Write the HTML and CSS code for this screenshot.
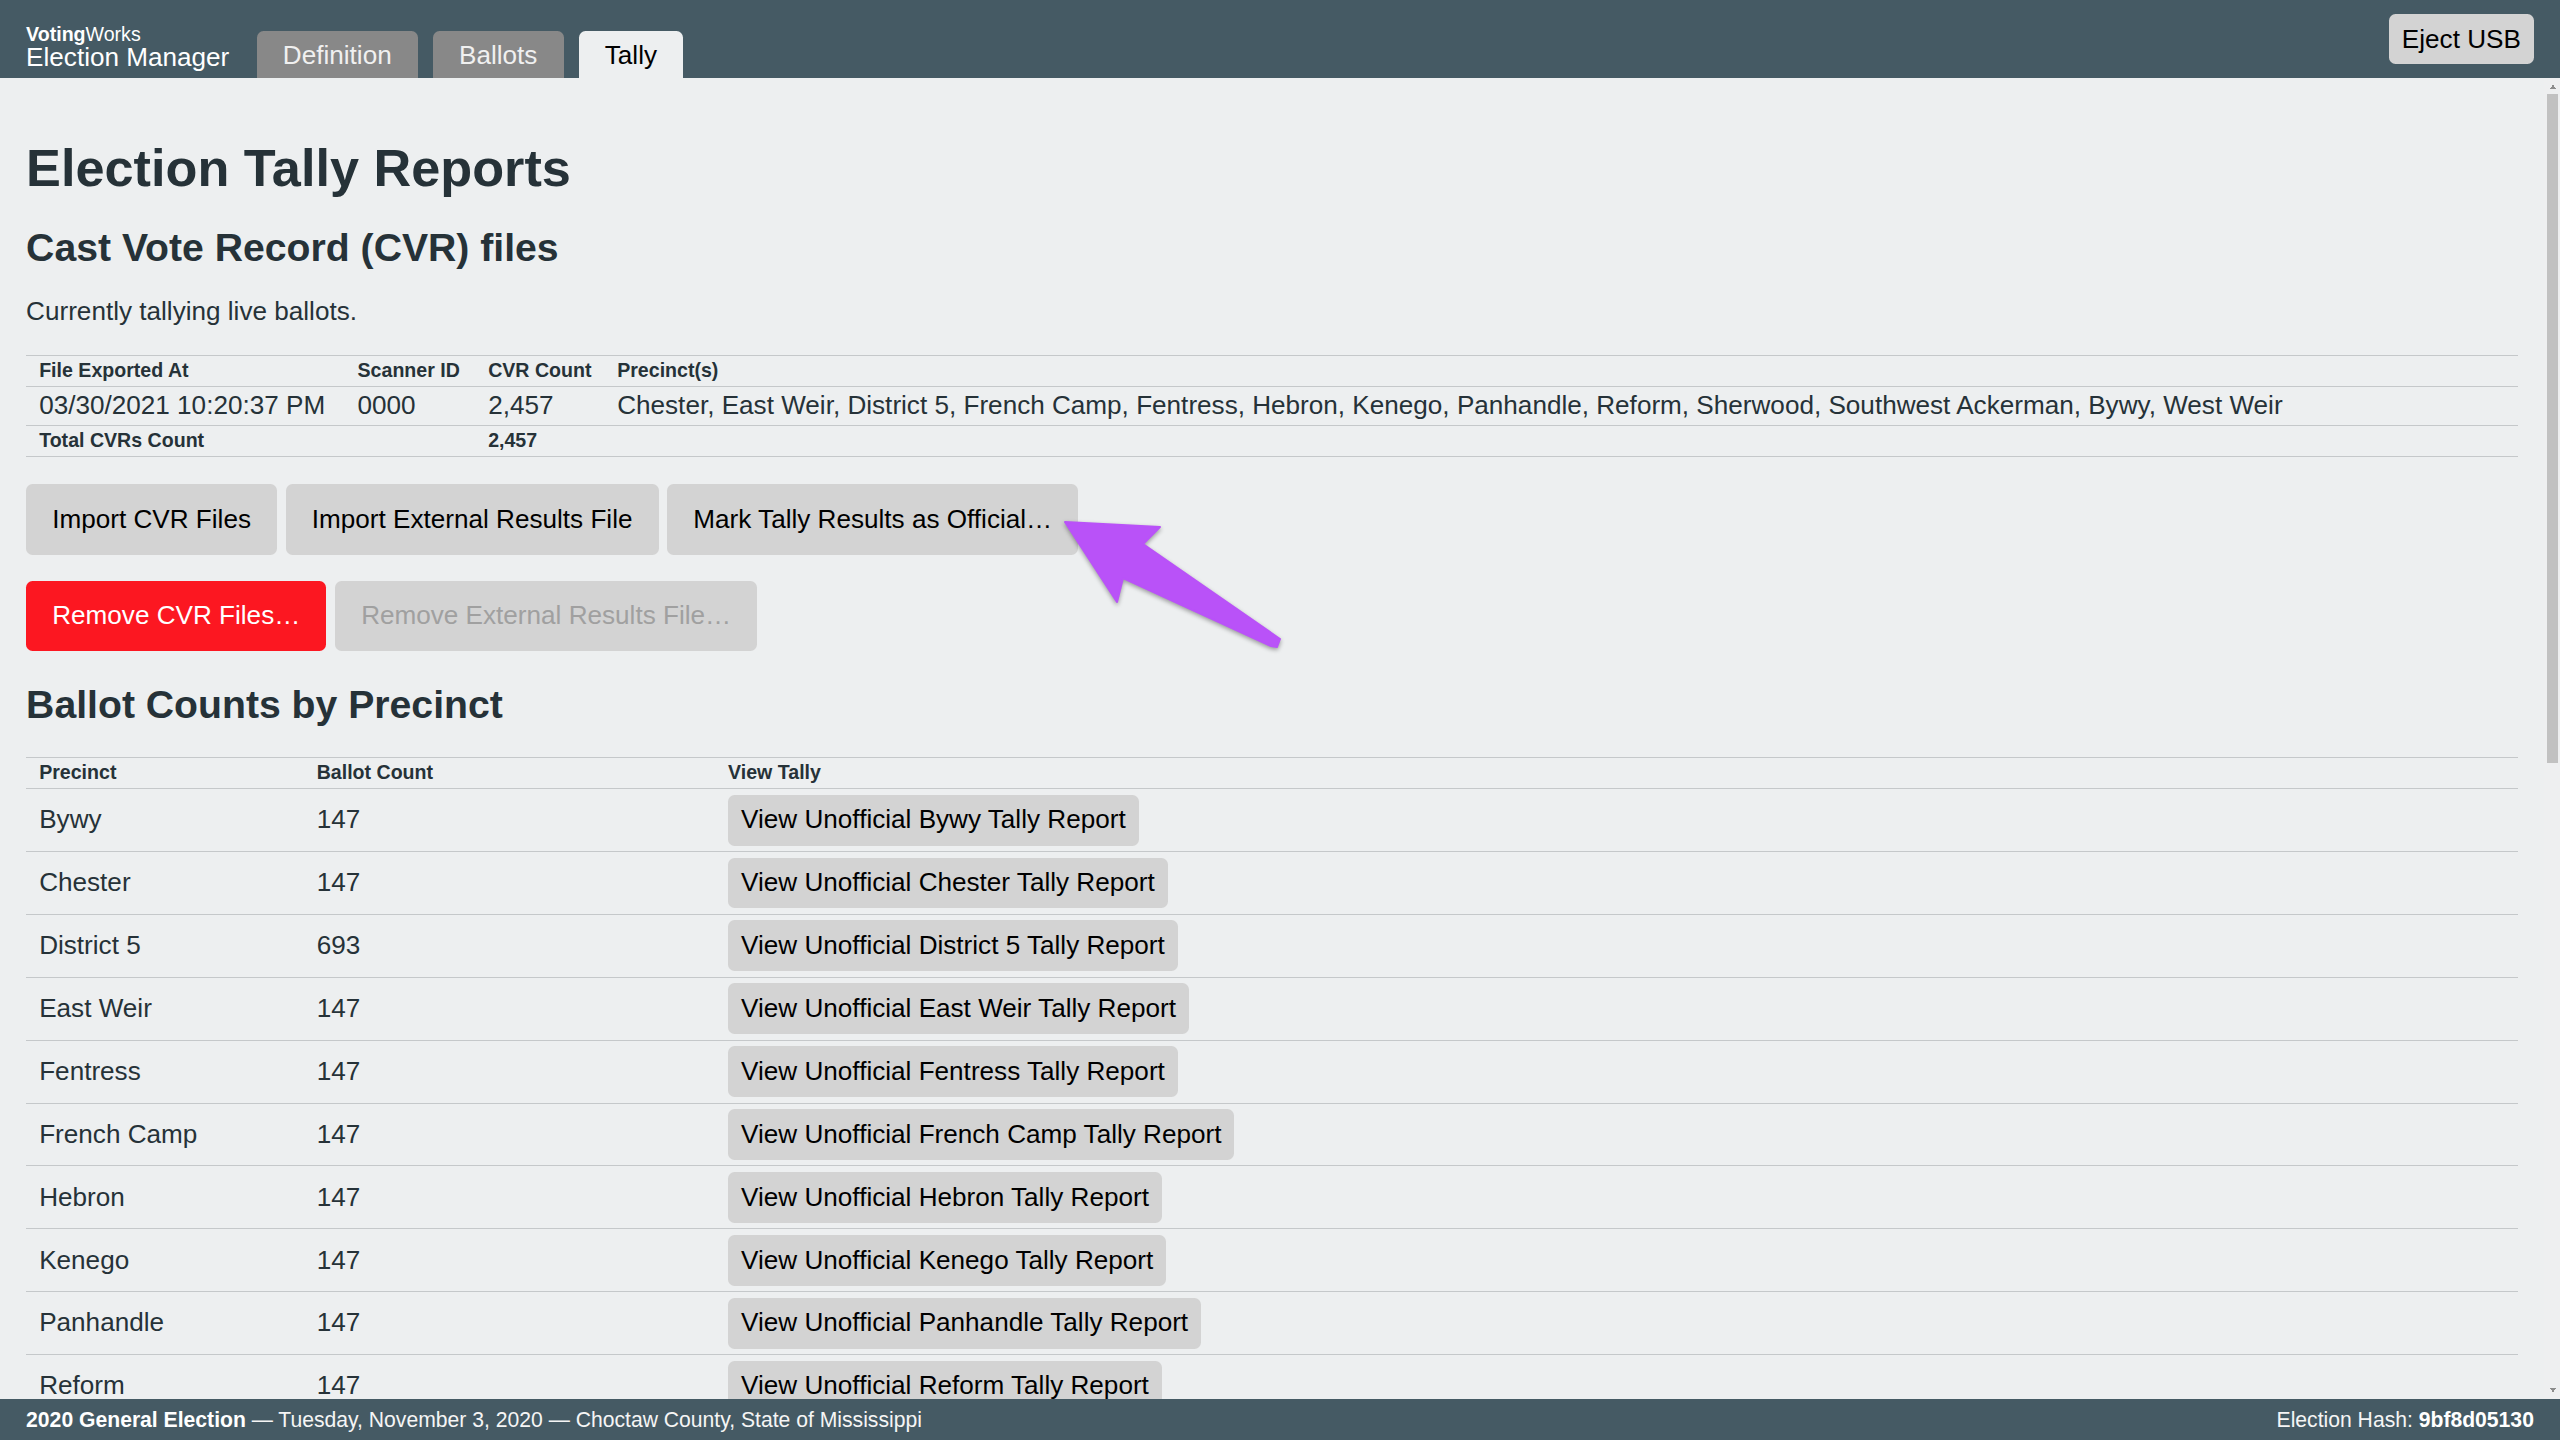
FILE: index.html
```html
<!DOCTYPE html>
<html lang="en">
<head>
<meta charset="utf-8">
<title>Election Manager - Tally</title>
<link rel="stylesheet" href="styles.css">
</head>
<body>
<div class="app">
  <header class="topbar">
    <div class="brand">
      <div class="brand-org"><strong>Voting</strong>Works</div>
      <div class="brand-app">Election Manager</div>
    </div>
    <nav class="tabs">
      <a class="tab">Definition</a>
      <a class="tab">Ballots</a>
      <a class="tab tab-active">Tally</a>
    </nav>
    <button class="btn btn-eject">Eject USB</button>
  </header>

  <div class="viewport">
    <main class="content">
      <h1>Election Tally Reports</h1>
      <h2>Cast Vote Record (CVR) files</h2>
      <p class="status-note">Currently tallying live ballots.</p>
      <table class="data-table cvr-table">
        <colgroup>
          <col class="c-exported"><col class="c-scanner"><col class="c-cvr"><col>
        </colgroup>
        <thead>
          <tr><th>File Exported At</th><th>Scanner ID</th><th>CVR Count</th><th>Precinct(s)</th></tr>
        </thead>
        <tbody>
          <tr><td>03/30/2021 10:20:37 PM</td><td>0000</td><td>2,457</td><td>Chester, East Weir, District 5, French Camp, Fentress, Hebron, Kenego, Panhandle, Reform, Sherwood, Southwest Ackerman, Bywy, West Weir</td></tr>
          <tr class="total-row"><td>Total CVRs Count</td><td></td><td>2,457</td><td></td></tr>
        </tbody>
      </table>
      <div class="btn-row">
        <button class="btn">Import CVR Files</button>
        <button class="btn">Import External Results File</button>
        <button class="btn">Mark Tally Results as Official…</button>
      </div>
      <div class="btn-row btn-row-last">
        <button class="btn btn-danger">Remove CVR Files…</button>
        <button class="btn btn-disabled" disabled>Remove External Results File…</button>
      </div>

      <h2 class="section-title">Ballot Counts by Precinct</h2>
      <table class="data-table count-table">
        <colgroup>
          <col class="c-name"><col class="c-count"><col>
        </colgroup>
        <thead>
          <tr><th>Precinct</th><th>Ballot Count</th><th>View Tally</th></tr>
        </thead>
        <tbody>
          <tr><td>Bywy</td><td>147</td><td><button class="btn btn-small">View Unofficial Bywy Tally Report</button></td></tr>
          <tr><td>Chester</td><td>147</td><td><button class="btn btn-small">View Unofficial Chester Tally Report</button></td></tr>
          <tr><td>District 5</td><td>693</td><td><button class="btn btn-small">View Unofficial District 5 Tally Report</button></td></tr>
          <tr><td>East Weir</td><td>147</td><td><button class="btn btn-small">View Unofficial East Weir Tally Report</button></td></tr>
          <tr><td>Fentress</td><td>147</td><td><button class="btn btn-small">View Unofficial Fentress Tally Report</button></td></tr>
          <tr><td>French Camp</td><td>147</td><td><button class="btn btn-small">View Unofficial French Camp Tally Report</button></td></tr>
          <tr><td>Hebron</td><td>147</td><td><button class="btn btn-small">View Unofficial Hebron Tally Report</button></td></tr>
          <tr><td>Kenego</td><td>147</td><td><button class="btn btn-small">View Unofficial Kenego Tally Report</button></td></tr>
          <tr><td>Panhandle</td><td>147</td><td><button class="btn btn-small">View Unofficial Panhandle Tally Report</button></td></tr>
          <tr><td>Reform</td><td>147</td><td><button class="btn btn-small">View Unofficial Reform Tally Report</button></td></tr>
        </tbody>
      </table>
    </main>

    <div class="scrollbar" aria-hidden="true">
      <div class="scroll-btn scroll-up"></div>
      <div class="scroll-track"><div class="scroll-thumb"></div></div>
      <div class="scroll-btn scroll-down"></div>
    </div>
  </div>

  <footer class="statusbar">
    <div><strong>2020 General Election</strong> — Tuesday, November 3, 2020 — Choctaw County, State of Mississippi</div>
    <div>Election Hash: <strong>9bf8d05130</strong></div>
  </footer>

  <svg class="annotation" viewBox="0 0 2560 1440" aria-hidden="true">
    <polygon class="arrow" points="1065,522 1160,527 1143,544 1280,639 1277,647 1271,646 1123,578 1117,602"/>
  </svg>
</div>
</body>
</html>
```

FILE: styles.css
```css
html {
  font-size: 26.12px;
}

body {
  margin: 0;
  font-family: "Liberation Sans", Arial, Helvetica, sans-serif;
  color: #263238;
  background: #edeff0;
}

.app {
  position: relative;
  height: 100vh;
  display: flex;
  flex-direction: column;
  overflow: hidden;
}

/* ---------- top bar ---------- */
.topbar {
  flex: none;
  height: 3rem;
  display: flex;
  align-items: flex-end;
  padding: 0 1rem;
  background: #455a64;
  box-sizing: border-box;
}

.brand {
  color: #fff;
  margin-bottom: 0.3rem;
}

.brand-org {
  font-size: 0.75rem;
  line-height: 1;
}

.brand-app {
  font-size: 1rem;
  line-height: 1;
}

.tabs {
  display: flex;
  gap: 0.58rem;
  margin-left: 1.05rem;
}

.tab {
  display: block;
  height: 1.8rem;
  box-sizing: border-box;
  padding: 0.08rem 1rem 0;
  line-height: 1.72rem;
  font-size: 1rem;
  color: #f0f0f0;
  background: #888888;
  border-radius: 0.25rem 0.25rem 0 0;
}

.tab-active {
  color: #000;
  background: #edeff0;
}

/* ---------- buttons ---------- */
.btn {
  font-family: inherit;
  font-size: 1rem;
  line-height: 1.2;
  color: #000;
  background: #d3d3d3;
  border: none;
  border-radius: 0.25rem;
  padding: 0.75rem 1rem;
  white-space: nowrap;
}

.btn-eject {
  margin-left: auto;
  align-self: center;
  padding: 0.35rem 0.5rem;
}

.btn-danger {
  background: #fc1721;
  color: #fff;
}

.btn-disabled {
  color: #a0a0a0;
}

.btn-small {
  display: inline-block;
  vertical-align: top;
  padding: 0.375rem 0.5rem;
}

.btn-row {
  display: flex;
  gap: 0.33rem;
  margin: 0 0 1rem;
}

.btn-row-last {
  margin-bottom: 1.125rem;
}

/* ---------- main content + scrollbar ---------- */
.viewport {
  flex: 1;
  min-height: 0;
  display: flex;
}

.content {
  flex: 1;
  min-width: 0;
  overflow: hidden;
  padding: 2.24rem 1rem 0;
}

.scrollbar {
  flex: none;
  width: 16px;
  display: flex;
  flex-direction: column;
  background: #eeeff0;
}

.scroll-btn {
  flex: none;
  height: 16px;
  background-repeat: no-repeat;
  background-size: 8px 5px;
  background-position: 5px center;
}

.scroll-up {
  background-image: conic-gradient(from 150deg at 50% 0, #8c8c8c 60deg, transparent 0);
}

.scroll-down {
  background-image: conic-gradient(from -30deg at 50% 100%, #8c8c8c 60deg, transparent 0);
}

.scroll-track {
  flex: 1;
  padding: 0 2px 0 3px;
}

.scroll-thumb {
  height: 669px;
  background: #c1c1c1;
}

h1 {
  font-size: 2rem;
  line-height: 1.2;
  margin: 0 0 0.94rem;
}

h2 {
  font-size: 1.5rem;
  line-height: 1.2;
  margin: 0 0 0.94rem;
}

.section-title {
  margin-bottom: 1.13rem;
}

p {
  line-height: 1.2;
  margin: 0 0 1rem;
}

.status-note {
  margin-bottom: 1.06rem;
}

/* ---------- tables ---------- */
.data-table {
  width: 100%;
  table-layout: fixed;
  border-collapse: collapse;
  border-top: 1px solid #c5c8ca;
  margin: 0;
}

.data-table th,
.data-table td {
  text-align: left;
  white-space: nowrap;
  padding: 0.125rem 0.5rem;
  line-height: 1.2;
  border-bottom: 1px solid #c5c8ca;
}

.data-table th {
  font-size: 0.75rem;
  font-weight: bold;
}

.data-table td {
  font-size: 1rem;
}

.data-table .total-row td {
  font-size: 0.75rem;
  font-weight: bold;
}

.cvr-table {
  margin-bottom: 1.06rem;
}

.c-exported { width: 12.19rem; }
.c-scanner { width: 5rem; }
.c-cvr { width: 4.94rem; }

.count-table td {
  padding-top: 0.21rem;
  padding-bottom: 0.21rem;
}

.c-name { width: 10.625rem; }
.c-count { width: 15.75rem; }

/* ---------- footer ---------- */
.statusbar {
  flex: none;
  display: flex;
  justify-content: space-between;
  padding: 0.3rem 1rem;
  font-size: 0.81rem;
  line-height: 1.2;
  color: #f5f5f5;
  background: #455a64;
}

.statusbar strong {
  color: #fff;
}

/* ---------- annotation overlay ---------- */
.annotation {
  position: absolute;
  left: 0;
  top: 0;
  width: 100%;
  height: 100%;
  pointer-events: none;
}

.arrow {
  fill: #b952f8;
  stroke: #b952f8;
  stroke-width: 2;
  stroke-linejoin: round;
  filter: drop-shadow(0 2px 2px rgba(0, 0, 0, 0.35));
}
```
